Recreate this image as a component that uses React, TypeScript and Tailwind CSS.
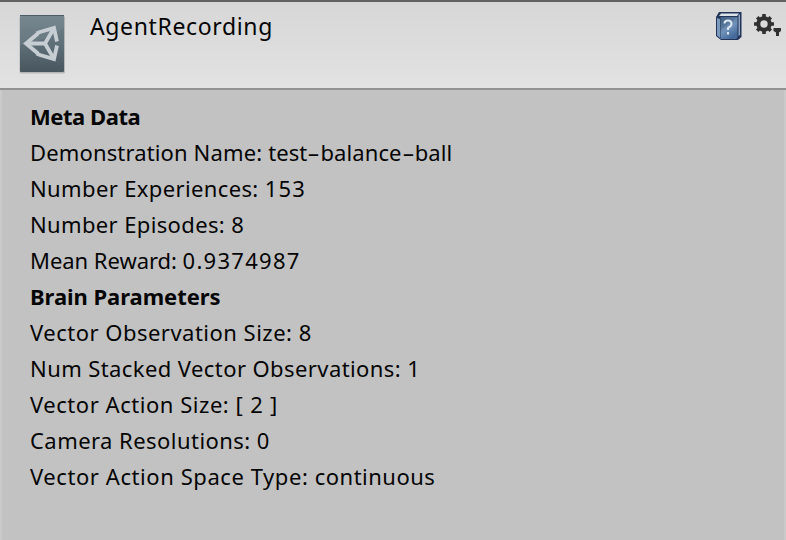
const meta = [
  { label: "Demonstration Name:", tracking: "tracking-[0.14px]", words: ["test", "balance", "ball"], valueTracking: "tracking-[0.11px]" },
  { label: "Number Experiences:", tracking: "tracking-[0.37px]", words: ["153"], valueTracking: "tracking-[1.2px]" },
  { label: "Number Episodes:", tracking: "tracking-[0.36px]", words: ["8"], valueTracking: "tracking-[1.3px]" },
  { label: "Mean Reward:", tracking: "tracking-[-0.04px]", words: ["0.9374987"], valueTracking: "tracking-[1.27px]" },
];

const brain = [
  { label: "Vector Observation Size:", tracking: "tracking-[0.49px]", words: ["8"], valueTracking: "tracking-[1.3px]" },
  { label: "Num Stacked Vector Observations:", tracking: "tracking-[0.41px]", words: ["1"], valueTracking: "tracking-[1.3px]" },
  { label: "Vector Action Size:", tracking: "tracking-[0.54px]", words: ["[ 2 ]"], valueTracking: "tracking-[0.8px]" },
  { label: "Camera Resolutions:", tracking: "tracking-[0.45px]", words: ["0"], valueTracking: "tracking-[1.3px]" },
  { label: "Vector Action Space Type:", tracking: "tracking-[0.57px]", words: ["continuous"], valueTracking: "tracking-[0.5px]" },
];

type Row = (typeof meta)[number];

function Property({ label, tracking, words, valueTracking }: Row) {
  return (
    <p className="h-9 whitespace-pre">
      <span className={tracking}>{label + " "}</span>
      <span className={valueTracking}>
        {words.map((word, i) => (
          <span key={word}>
            {i > 0 && <span className="inline-block w-[13px] scale-x-[1.75] text-center tracking-normal">-</span>}
            {word}
          </span>
        ))}
      </span>
    </p>
  );
}

function AssetIcon() {
  return (
    <svg width="49" height="62" viewBox="0 0 49 62" className="shrink-0">
      <defs>
        <linearGradient id="asset" x1="0" y1="0" x2="0" y2="1">
          <stop offset="0" stopColor="#71828b" />
          <stop offset="0.5" stopColor="#5f7079" />
          <stop offset="1" stopColor="#48565e" />
        </linearGradient>
      </defs>
      <rect x="1.5" y="2" width="45.5" height="57.5" rx="1.5" fill="#000" opacity="0.18" />
      <rect x="2" y="1" width="44" height="57" rx="1" fill="url(#asset)" />
      <path d="M2 1.5H46" stroke="#4d5c65" />
      <path d="M2 2H46V14C31 25 14 30 2 31Z" fill="#fff" opacity="0.05" />
      <g fill="none" stroke="#c6ced3" strokeWidth="3.8">
        <path d="M20 19.500L8 29.500L20 39.500M18.500 19.500L22 18L36 14L39 27.500M18.500 39.500L22 41L36 45L39 31.500" />
        <path d="M8 29.500H27L36 14M27 29.500L36 45" />
      </g>
    </svg>
  );
}

function HelpIcon() {
  return (
    <svg width="28" height="30" viewBox="0 0 28 30">
      <defs>
        <linearGradient id="cover" x1="0" y1="0" x2="0.5" y2="1">
          <stop offset="0" stopColor="#4b6789" />
          <stop offset="0.6" stopColor="#7192ba" />
          <stop offset="1" stopColor="#456a9b" />
        </linearGradient>
      </defs>
      <path d="M5 1H27.500V26L24 29H7L2 25V6Z" fill="#223457" />
      <path d="M7 2.500H25L23 5H5Z" fill="#dbe2e8" />
      <path d="M24.500 4L26 3V24L24.500 25Z" fill="#8ea5c6" />
      <path d="M3 7L6 8V27L3 24.500Z" fill="#7a99bc" />
      <path d="M6.500 6H23.500V26.500L22 28H6.500Z" fill="url(#cover)" />
      <path d="M6.500 6H23.500L6.500 19Z" fill="#24405f" opacity="0.2" />
      <path d="M10.500 12.500Q10.500 9.500 14 9.500T17.500 13Q17.500 15 14 17V19M14 21V23.500" fill="none" stroke="#dce7f2" strokeWidth="2" />
    </svg>
  );
}

function SettingsIcon() {
  return (
    <svg width="27" height="24" viewBox="0 0 27 24" className="mt-[3px]">
      <g stroke="#303030" fill="none">
        <circle cx="10" cy="10" r="5.700" strokeWidth="4" />
        <path d="M10 0V4M10 16V20M0 10H4M16 10H20M3.200 3.200L6 6M14 14L16.800 16.800M16.800 3.200L14 6M6 14L3.200 16.800" strokeWidth="3.600" />
      </g>
      <path d="M19.500 14H27V17L25 18.500V22H22V18.500L19.500 17Z" fill="#303030" />
    </svg>
  );
}

export default function App() {
  return (
    <main className="flex h-[540px] w-[786px] flex-col border-x-2 border-[#cacaca] bg-[#c2c2c2] font-['Noto_Sans',sans-serif] text-[22px] leading-9 text-[#050505]">
      <header className="-mx-0.5 flex h-[90px] shrink-0 items-start border-t-2 border-b-2 border-t-[#626262] border-b-[#919191] bg-linear-to-b from-[#d7d7d7] to-[#e2e2e2] pt-3 pl-[18px] pr-[5px]">
        <AssetIcon />
        <h1 className="-mt-1.5 ml-[23px] flex-1 text-[23px] tracking-[0.64px]">AgentRecording</h1>
        <div className="flex gap-[12px] -mt-[3px]">
          <HelpIcon />
          <SettingsIcon />
        </div>
      </header>
      <section className="pt-2 pl-7">
        <h2 className="h-9 font-bold tracking-[-0.45px]">Meta Data</h2>
        {meta.map((row) => <Property key={row.label} {...row} />)}
        <h2 className="h-9 font-bold tracking-[-0.05px]">Brain Parameters</h2>
        {brain.map((row) => <Property key={row.label} {...row} />)}
      </section>
    </main>
  );
}
